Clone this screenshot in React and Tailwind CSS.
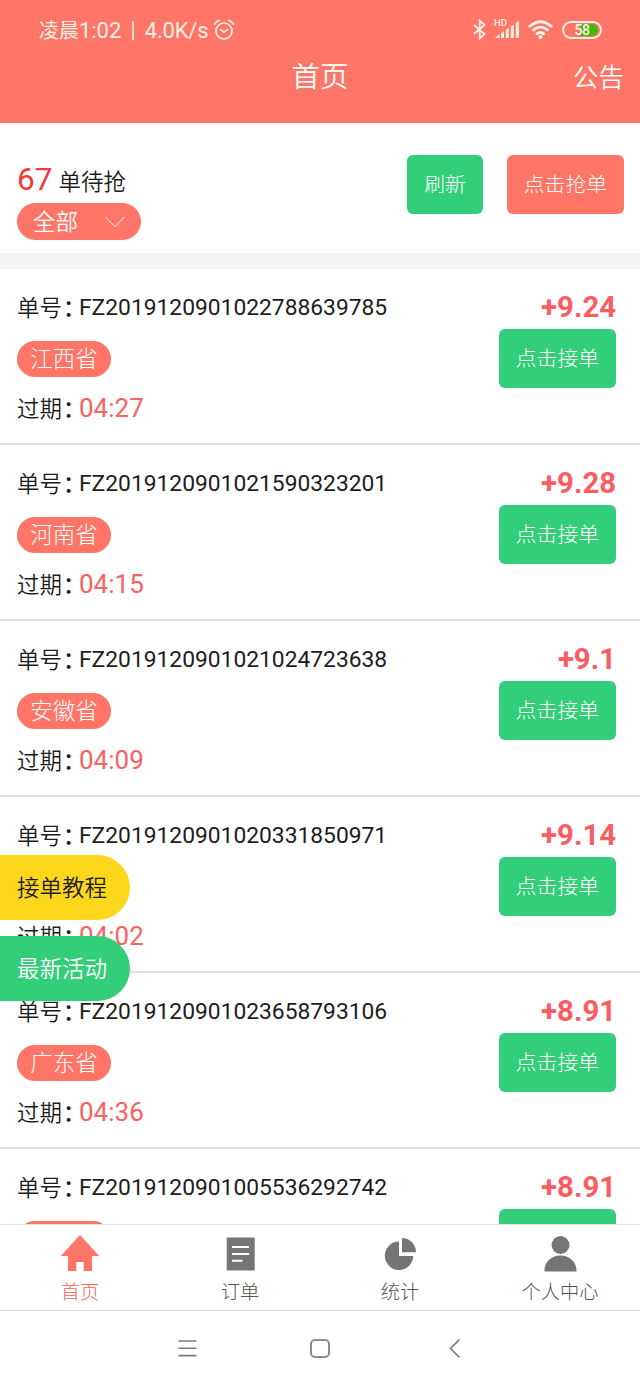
const orders = [
    { id: "FZ2019120901022788639785", area: "江西省", time: "04:27", price: "+9.24" },
    { id: "FZ2019120901021590323201", area: "河南省", time: "04:15", price: "+9.28" },
    { id: "FZ2019120901021024723638", area: "安徽省", time: "04:09", price: "+9.1" },
    { id: "FZ2019120901020331850971", area: "", time: "04:02", price: "+9.14" },
    { id: "FZ2019120901023658793106", area: "广东省", time: "04:36", price: "+8.91" },
    { id: "FZ2019120901005536292742", area: "", time: "", price: "+8.91" },
];

function StatusBar() {
    return (
        <div className="flex flex-row items-center h-[60px] pl-[39px] pr-[38px] text-[22px] text-[#fff0e4]">
            <span className="whitespace-nowrap text-[20px] pt-px">凌晨</span>
            <span className="tracking-[-0.05px] pt-px">1:02</span>
            <span className="w-[1.5px] h-[19px] mx-[11px] bg-[#fff0e4]/80"></span>
            <span className="tracking-[-0.2px] pt-px">4.0K/s</span>
            <svg className="ml-[5px] w-[22px] h-[22px]" viewBox="0 0 22 22" fill="none" stroke="currentColor" strokeWidth="1.7" strokeLinecap="round">
                <circle cx="11" cy="12" r="8" />
                <path d="M1.5 5.2Q3 2.4 6 1.6M16 1.6Q19 2.4 20.5 5.2M7.8 10.8L11 13.2L14.4 10.6" />
            </svg>
            <svg className="ml-auto w-[14px] h-[22px]" viewBox="0 0 14 22" fill="none" stroke="currentColor" strokeWidth="1.8">
                <path d="M1 6L11.5 15L6.7 19.4V1.6L11.5 6L1 15" />
            </svg>
            <svg className="ml-[7px] w-[27px] h-[22px] overflow-visible" viewBox="0 0 27 22" fill="currentColor">
                <text x="0" y="7.3" fontSize="9.5" fontWeight="500">HD</text>
                <path d="M1 19L5.5 15V19ZM7 14.2L10 12.2V19H7ZM11.8 11L14.8 9V19H11.8ZM16.8 7.5L19.8 5.5V19H16.8ZM21.8 4L25 1.5V19H21.8Z" />
            </svg>
            <svg className="ml-[7px] w-[25px] h-[20px]" viewBox="0 0 25 20" fill="none" stroke="currentColor" strokeWidth="2.7">
                <path d="M1 7Q12.5 -3.5 24 7M4.6 10.8Q12.5 3.5 20.4 10.8M8.2 14.4Q12.5 10.6 16.8 14.4" />
                <circle cx="12.5" cy="17" r="2.1" fill="currentColor" stroke="none" />
            </svg>
            <div className="relative ml-[9px] flex items-center justify-center w-10 h-[18px] rounded-full border-2 border-[#fff0e4]">
                <div className="absolute right-[2px] top-px w-[18px] h-3 rounded-r-full bg-[#45b80c]"></div>
                <span className="relative text-[14px] leading-none font-medium tracking-[-0.5px]">58</span>
            </div>
        </div>
    );
}

function Order({ order }) {
    return (
        <div className="flex flex-row justify-between h-44 shrink-0 pl-[17px] pr-6 border-b-2 border-[#dedede]">
            <div className="flex flex-col items-start pt-[22px]">
                <div className="flex flex-row items-center h-8">
                    <Label text="单号" />
                    <span className="pt-[3px] text-[22.8px]">{order.id}</span>
                </div>
                <div className="flex items-center justify-center w-[94px] h-9 mt-[18px] pt-[2px] rounded-full bg-[#ff7567] text-white text-[22.5px] font-light">
                    {order.area}
                </div>
                <div className="flex flex-row items-center h-8 mt-[15px]">
                    <Label text="过期" />
                    <span className="text-[26px] text-[#fb6063]">{order.time}</span>
                </div>
            </div>
            <div className="flex flex-col items-end pt-[15px]">
                <span className="h-[45px] leading-[46px] text-[29.3px] font-bold text-[#fa5c5f]">{order.price}</span>
                <Button text="点击接单" color="bg-[#32ce79]" />
            </div>
        </div>
    );
}

function Label({ text }) {
    return (
        <span className="flex w-[62px] pt-1 whitespace-nowrap text-[22.5px] font-[350]">
            {text}
            <span className="ml-px font-medium tracking-[-8px]">：</span>
        </span>
    );
}

function Button({ text, color }) {
    return (
        <button className={`flex items-center h-[59px] px-[17px] pt-[2px] rounded-md text-white text-[20.8px] font-light ${color}`}>
            {text}
        </button>
    );
}

function Tab({ text, active, children }) {
    return (
        <div className={`flex flex-col items-center w-1/4 pt-[9px] ${active ? "text-[#ff7567]" : "text-[#757575]"}`}>
            <svg className="w-10 h-10" viewBox="0 0 40 40" fill="currentColor">{children}</svg>
            <span className={`mt-[5px] text-[19.3px] leading-7 font-light ${active ? "text-[#ff6354]" : "text-[#555]"}`}>{text}</span>
        </div>
    );
}

export default () => {
    return (
        <div className="relative flex flex-col w-[640px] h-[1387px] overflow-hidden bg-white text-[#1c1c1c] font-['Roboto','Noto_Sans_CJK_SC',sans-serif]">
            <header className="h-[123px] shrink-0 bg-[#ff7567]">
                <StatusBar />
                <div className="grid grid-cols-3 items-center h-[37px] px-4 leading-none text-white font-[350]">
                    <span></span>
                    <h1 className="text-center text-[28.5px] leading-none">首页</h1>
                    <span className="text-right text-[25.6px]">公告</span>
                </div>
            </header>

            <section className="flex flex-row justify-between h-[146px] shrink-0 pl-[17px] pr-4 border-b-16 border-[#f4f4f4]">
                <div className="pt-[34px]">
                    <div className="flex flex-row items-baseline h-[46px] leading-[46px]">
                        <span className="text-[31.5px] text-[#f43838]">67</span>
                        <span className="ml-[6px] text-[22.5px] font-[350]">单待抢</span>
                    </div>
                    <div className="flex flex-row items-center justify-between w-[124px] h-[37px] px-4 rounded-full bg-[#ff7567] text-white text-[22.5px] font-[350]">
                        <span className="pt-[2px]">全部</span>
                        <svg className="w-5 h-3" viewBox="0 0 20 12" fill="none" stroke="currentColor">
                            <path d="M0.5 1L10 10.5L19.5 1" />
                        </svg>
                    </div>
                </div>
                <div className="flex flex-row gap-6 pt-8">
                    <Button text="刷新" color="bg-[#32ce79]" />
                    <Button text="点击抢单" color="bg-[#ff7567]" />
                </div>
            </section>

            <main className="flex flex-col h-[955px] shrink-0 overflow-hidden">
                {orders.map((order) => (
                    <Order key={order.id} order={order} />
                ))}
            </main>

            <nav className="flex flex-row h-[87px] shrink-0 border-y border-[#e2e2e2]">
                <Tab text="首页" active>
                    <path d="M20 1L39.3 22H32V37H23.7V28H16.3V37H8V22H0.7Z" />
                </Tab>
                <Tab text="订单">
                    <path d="M6.7 3.5H34.7V36.5H6.7Z" />
                    <path d="M12 13H29M12 20H29M12 26.8H22.5" stroke="white" strokeWidth="2" />
                </Tab>
                <Tab text="统计">
                    <path d="M19 7.5A14.2 14.2 0 1 0 33.2 22H19Z" />
                    <path d="M22 4V18.3H36A14.2 14.2 0 0 0 22 4Z" />
                </Tab>
                <Tab text="个人中心">
                    <circle cx="20.5" cy="11" r="9" />
                    <path d="M4.5 37.5V36A16 14.5 0 0 1 36.5 36V37.5Z" />
                </Tab>
            </nav>

            <footer className="flex flex-row items-center h-[76px] shrink-0 pl-[178px] text-[#7b7b7b]">
                <svg className="w-[19px] h-5" viewBox="0 0 19 20" fill="none" stroke="currentColor" strokeWidth="1.6">
                    <path d="M0.5 2H18.5M0.5 9.3H18.5M0.5 16.6H18.5" />
                </svg>
                <span className="ml-[113px] mb-px w-5 h-[19px] rounded-[5px] border-2 border-[#8c8c8c]"></span>
                <svg className="ml-[119px] w-3 h-5" viewBox="0 0 12 20" fill="none" stroke="currentColor" strokeWidth="1.6">
                    <path d="M10.5 0.5L1.5 9.5L10.5 18.5" />
                </svg>
            </footer>

            <button className="absolute left-0 top-[855px] flex items-center w-[130px] h-[65px] pl-[17px] pt-[2px] rounded-r-full bg-[#fdd71b] text-[22.5px] font-[350]">
                接单教程
            </button>
            <button className="absolute left-0 top-[936px] flex items-center w-[130px] h-[65px] pl-[17px] pt-[2px] rounded-r-full bg-[#32ce79] text-white text-[22.5px] font-[350]">
                最新活动
            </button>
        </div>
    );
};
